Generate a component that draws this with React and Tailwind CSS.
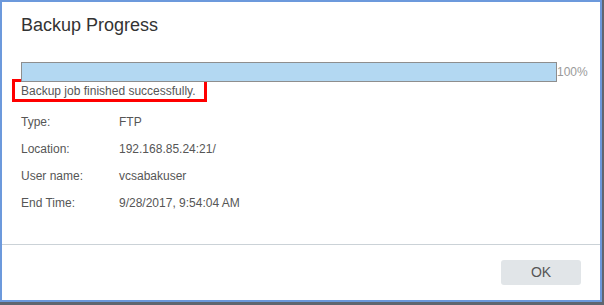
export default function App() {
  const rows = [
    ["Type:", "FTP"],
    ["Location:", "192.168.85.24:21/"],
    ["User name:", "vcsabakuser"],
    ["End Time:", "9/28/2017, 9:54:04 AM"],
  ];

  return (
    <div className="w-[604px] h-[305px] bg-[#5f6670] font-['Liberation_Sans',Arial,sans-serif]">
      <div className="w-[602px] h-[302px] border-2 border-[#6c99dc] bg-white flex flex-col">
        <div className="px-[19px] pt-[12px] h-[48px]">
          <h1 className="text-[18px] leading-[22px] text-[#333]">Backup Progress</h1>
        </div>
        <div className="pl-[19px] pt-[12px] flex-1">
          <div className="flex items-center">
            <div className="w-[536px] h-[20px] shrink-0 border border-[#8e8e8e] bg-[#b3d8f2]" />
            <span className="text-[12px] text-[#9a9a9a] leading-none">100%</span>
          </div>
          <div className="-ml-[9px] mt-[-3px] w-[195px] h-[23px] border-[3px] border-[#ff0000] flex items-center pl-[6px]">
            <span className="text-[12px] text-[#565656]">Backup job finished successfully.</span>
          </div>
          <div className="mt-[13px] flex flex-col gap-[13px]">
            {rows.map(([label, value]) => (
              <div key={label} className="flex text-[12px] leading-[14px] text-[#565656]">
                <span className="w-[98px]">{label}</span>
                <span>{value}</span>
              </div>
            ))}
          </div>
        </div>
        <div className="h-[56px] border-t border-[#cbd2d7] flex items-start justify-end pr-[19px] pt-[15px]">
          <button className="w-[80px] h-[25px] rounded-[3px] bg-[#e1e5e8] text-[14px] text-[#565656]">
            OK
          </button>
        </div>
      </div>
    </div>
  );
}
